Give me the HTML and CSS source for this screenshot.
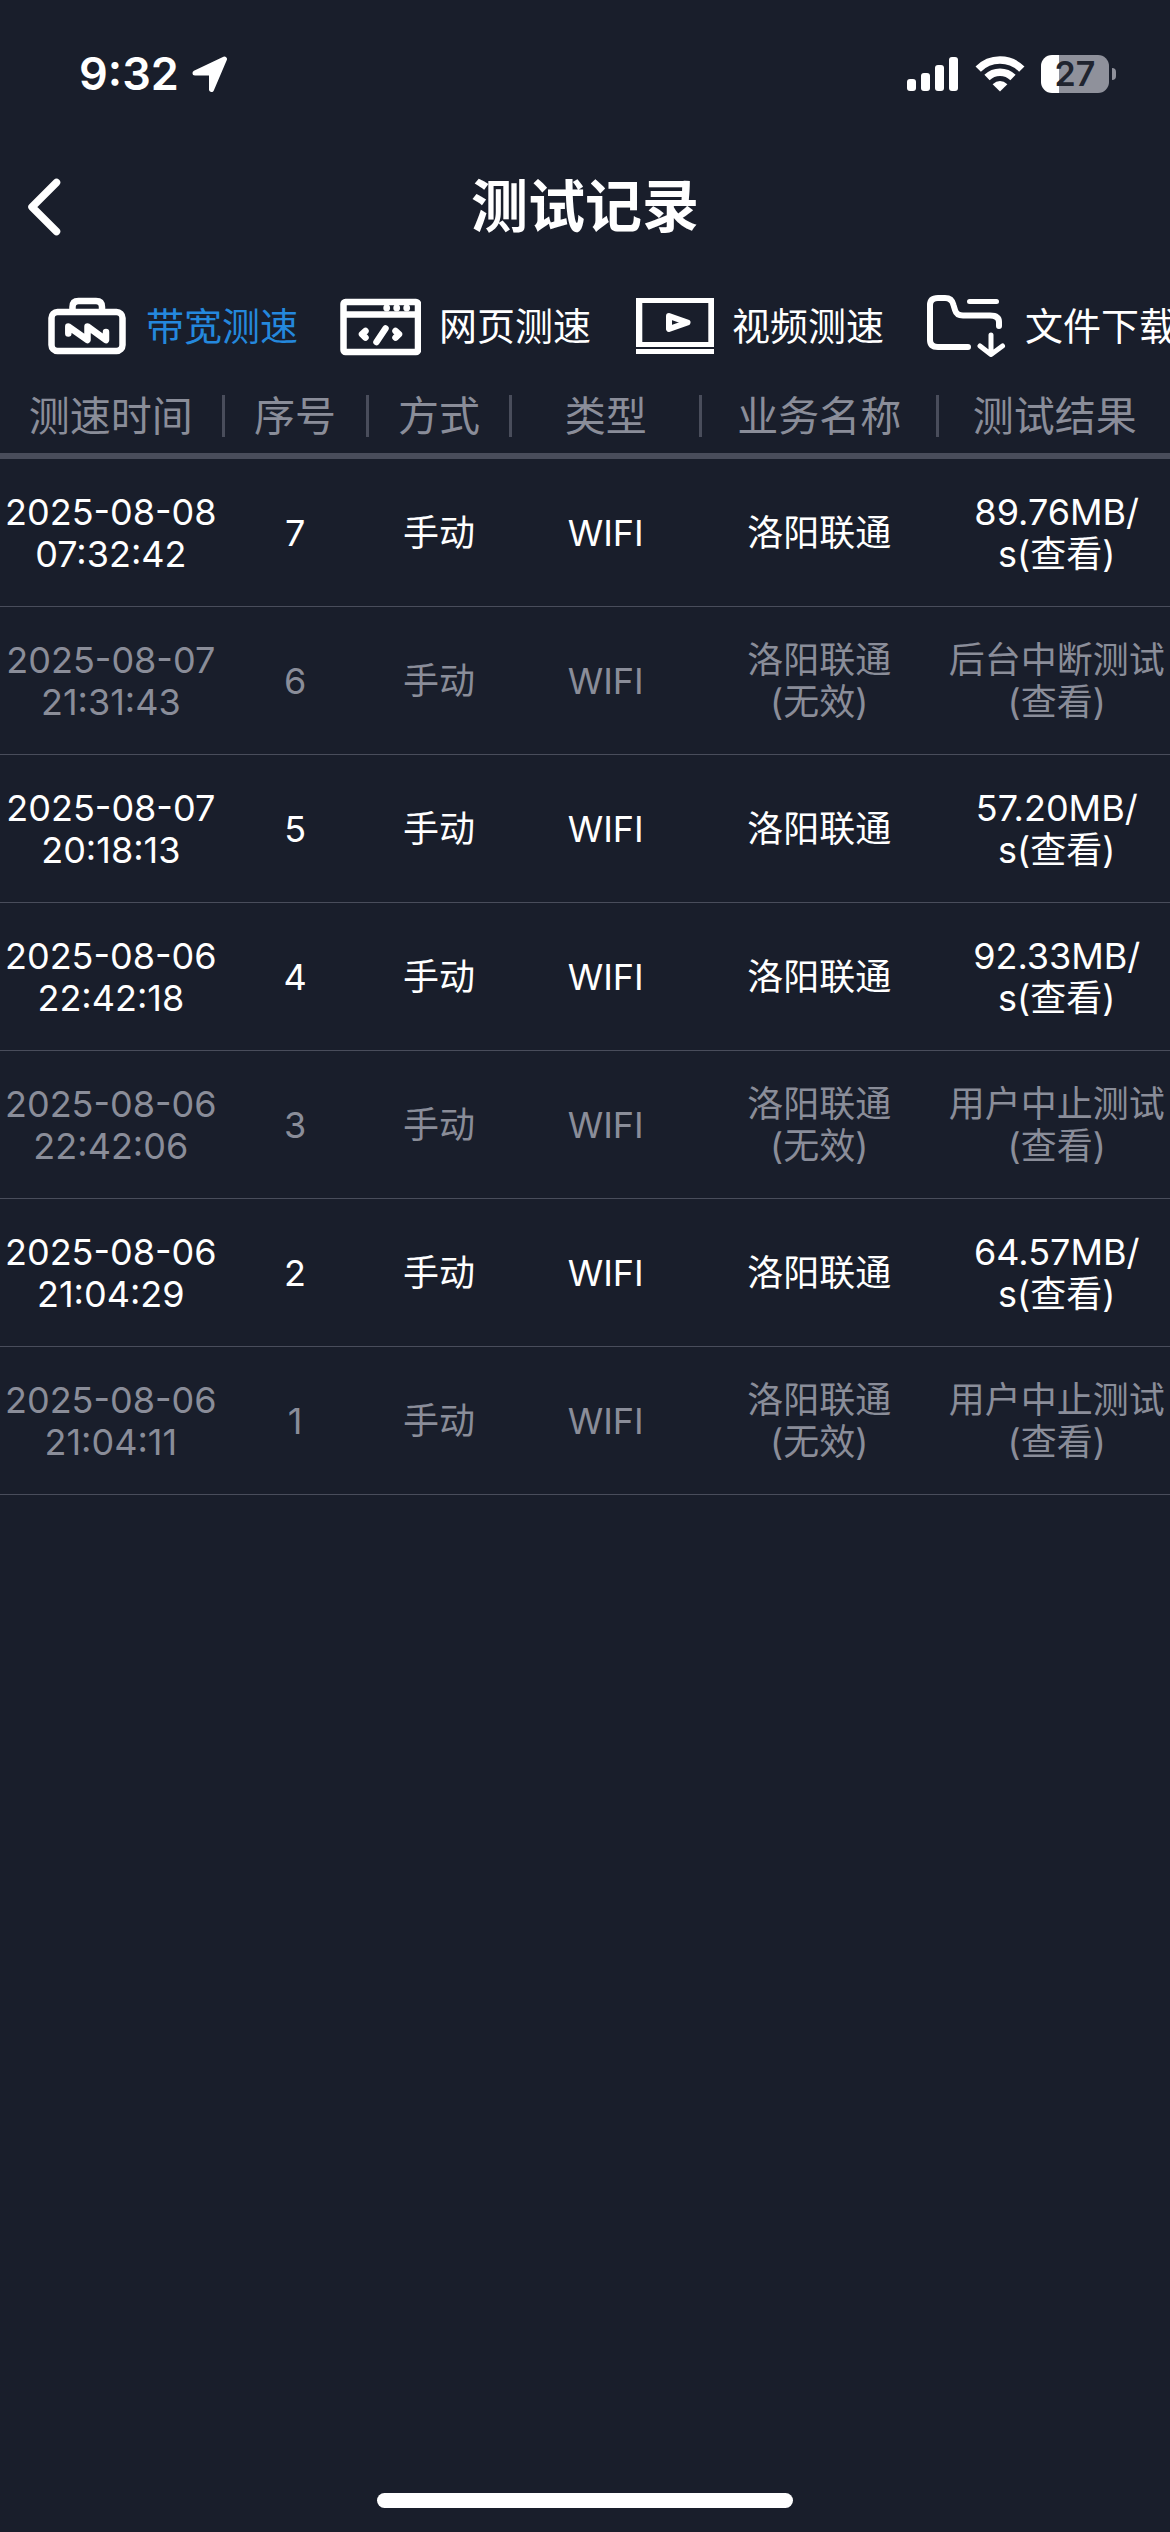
FILE: index.html
```html
<!DOCTYPE html>
<html lang="zh-CN">
<head>
<meta charset="utf-8">
<meta name="viewport" content="width=device-width, initial-scale=1">
<title>测试记录</title>
<link rel="stylesheet" href="styles.css">
</head>
<body>
<div class="screen">
  <div class="status">
    <div class="status-left">
      <span class="clock">9:32</span>
      <svg class="location" width="36" height="36" viewBox="0 0 36 36" aria-hidden="true"><path d="M3 17 32.500 3 19.500 33.500V17Z" fill="#fff" stroke="#fff" stroke-width="5" stroke-linejoin="round"/></svg>
    </div>
    <div class="status-right">
      <svg width="52" height="38" viewBox="0 0 52 38" aria-hidden="true" fill="#fff"><rect x="0" y="24" width="9" height="12" rx="3"/><rect x="14" y="18" width="9" height="18" rx="3"/><rect x="28" y="10" width="9" height="26" rx="3"/><rect x="42" y="2" width="9" height="34" rx="3"/></svg>
      <svg width="50" height="38" viewBox="0 0 50 38" aria-hidden="true"><g fill="none" stroke="#fff" stroke-width="7.500"><path d="M3.200 14.200A30.500 30.500 0 0 1 46.800 14.200"/><path d="M12 22.500A18.500 18.500 0 0 1 38 22.500"/></g><path d="M25 36.500 17.600 29.200Q25 22.800 32.400 29.200Z" fill="#fff"/></svg>
      <div class="battery"><span class="battery-body">27</span><span class="battery-tip"></span></div>
    </div>
  </div>

  <header class="nav">
    <button class="back" type="button" aria-label="返回">
      <svg width="34" height="58" viewBox="0 0 34 58" aria-hidden="true"><path d="M29.500 4.500 5 29 29.500 53.500" fill="none" stroke="#fff" stroke-width="7.500" stroke-linecap="round" stroke-linejoin="round"/></svg>
    </button>
    <h1 class="title">测试记录</h1>
  </header>

  <nav class="tabs">
    <a class="tab active" href="#bandwidth">
      <svg width="81" height="62" viewBox="0 0 81 62" aria-hidden="true" fill="none" stroke="#fff" stroke-linejoin="round"><rect x="4.500" y="17" width="71" height="39" rx="6" stroke-width="6.500"/><path d="M25.500 16V12Q25.500 6 31.500 6H49Q55 6 55 12V16" stroke-width="6.500"/><path d="M21.300 38.500V31.500L40.500 45V31.500L59 45V37" stroke-width="6.500" stroke-linecap="round"/></svg>
      <span>带宽测速</span>
    </a>
    <a class="tab" href="#web">
      <svg width="81" height="62" viewBox="0 0 81 62" aria-hidden="true" fill="none" stroke="#fff"><rect x="3.500" y="7" width="74.500" height="50" rx="2" stroke-width="6.500"/><path d="M4 19.500H78" stroke-width="6.500"/><g fill="#fff" stroke="none"><circle cx="46.700" cy="13" r="3.400"/><circle cx="56.700" cy="13" r="3.400"/><circle cx="66.700" cy="13" r="3.400"/></g><path d="M45.500 33.500 36.500 47" stroke-width="6.500" stroke-linecap="round"/><path d="M25.500 36 22 39.200 25.500 42.600M55.500 36 59 39.200 55.500 42.600" stroke-width="6.500" stroke-linecap="round" stroke-linejoin="round"/></svg>
      <span>网页测速</span>
    </a>
    <a class="tab" href="#video">
      <svg width="81" height="62" viewBox="0 0 81 62" aria-hidden="true" fill="#fff"><path d="M3 3H81V52H3ZM9.300 8V47H75.300V8Z" fill-rule="evenodd"/><path d="M3 54H81V59H3Z"/><path d="M36 21 54.500 27.500 36 34Z" fill="none" stroke="#fff" stroke-width="6" stroke-linejoin="round"/></svg>
      <span>视频测速</span>
    </a>
    <a class="tab" href="#download">
      <svg width="81" height="62" viewBox="0 0 81 62" aria-hidden="true" fill="none" stroke="#fff" stroke-linecap="round" stroke-linejoin="round"><path d="M42 52H12Q4 52 4 45V10Q4 3 12 3H19Q26 3 27.500 10L29 15Q30.500 20.500 37 20.500H64Q73 20.500 73 27V31" stroke-width="6"/><path d="M43.500 6.500H70.500" stroke-width="5"/><path d="M65 40V59M54 51 65 59.500 76.500 51" stroke-width="5"/></svg>
      <span>文件下载</span>
    </a>
  </nav>

  <table class="records">
    <colgroup><col class="c-time"><col class="c-no"><col class="c-mode"><col class="c-type"><col class="c-service"><col class="c-result"></colgroup>
    <thead>
      <tr>
        <th scope="col"><span>测速时间</span></th>
        <th scope="col"><span>序号</span></th>
        <th scope="col"><span>方式</span></th>
        <th scope="col"><span>类型</span></th>
        <th scope="col"><span>业务名称</span></th>
        <th scope="col"><span>测试结果</span></th>
      </tr>
    </thead>
    <tbody>
      <tr><td>2025-08-08 07:32:42</td><td>7</td><td>手动</td><td>WIFI</td><td>洛阳联通</td><td><a href="#7">89.76MB/<wbr>s(查看)</a></td></tr>
      <tr class="invalid"><td>2025-08-07 21:31:43</td><td>6</td><td>手动</td><td>WIFI</td><td>洛阳联通<wbr><span class="note">(无效)</span></td><td><a href="#6">后台中断测试<wbr><span class="note">(查看)</span></a></td></tr>
      <tr><td>2025-08-07 20:18:13</td><td>5</td><td>手动</td><td>WIFI</td><td>洛阳联通</td><td><a href="#5">57.20MB/<wbr>s(查看)</a></td></tr>
      <tr><td>2025-08-06 22:42:18</td><td>4</td><td>手动</td><td>WIFI</td><td>洛阳联通</td><td><a href="#4">92.33MB/<wbr>s(查看)</a></td></tr>
      <tr class="invalid"><td>2025-08-06 22:42:06</td><td>3</td><td>手动</td><td>WIFI</td><td>洛阳联通<wbr><span class="note">(无效)</span></td><td><a href="#3">用户中止测试<wbr><span class="note">(查看)</span></a></td></tr>
      <tr><td>2025-08-06 21:04:29</td><td>2</td><td>手动</td><td>WIFI</td><td>洛阳联通</td><td><a href="#2">64.57MB/<wbr>s(查看)</a></td></tr>
      <tr class="invalid"><td>2025-08-06 21:04:11</td><td>1</td><td>手动</td><td>WIFI</td><td>洛阳联通<wbr><span class="note">(无效)</span></td><td><a href="#1">用户中止测试<wbr><span class="note">(查看)</span></a></td></tr>
    </tbody>
  </table>

  <div class="home"><span class="home-bar"></span></div>
</div>
</body>
</html>
```

FILE: styles.css
```css
* {
  box-sizing: border-box;
}

body {
  margin: 0;
  background: #191e2b;
  color: #fff;
  font-family: Inter, "Noto Sans CJK SC", sans-serif;
}

a {
  color: inherit;
  text-decoration: none;
}

svg {
  display: block;
  flex: none;
}

.screen {
  display: flex;
  flex-direction: column;
  min-height: 100vh;
}

/* Status bar */
.status {
  display: flex;
  justify-content: space-between;
  align-items: center;
  height: 140px;
  padding: 8px 54px 0 79px;
}

.status-left {
  display: flex;
  align-items: center;
  gap: 13px;
}

.clock {
  font-size: 45px;
  line-height: 56px;
  font-weight: 600;
}

.status-right {
  display: flex;
  align-items: center;
  gap: 16px;
}

.battery {
  display: flex;
  align-items: center;
  gap: 3px;
}

.battery-body {
  width: 68px;
  border-radius: 11px;
  background: linear-gradient(to right, #fff 18px, #8f919b 18px);
  color: #20242f;
  font-size: 34px;
  line-height: 38px;
  font-weight: 600;
  text-align: center;
}

.battery-tip {
  width: 4px;
  height: 12px;
  border-radius: 0 6px 6px 0;
  background: #8f919b;
}

/* Title bar */
.nav {
  display: grid;
  grid-template-columns: 1fr auto 1fr;
  align-items: center;
  height: 133px;
  padding: 0 27px;
}

.back {
  justify-self: start;
  padding: 0;
  border: 0;
  background: none;
}

.title {
  margin: 0;
  font-size: 57px;
  line-height: 80px;
  font-weight: 700;
}

/* Test type tabs */
.tabs {
  display: flex;
  gap: 42px;
  height: 105px;
  padding-left: 47px;
  overflow: hidden;
}

.tab {
  display: flex;
  flex: none;
  align-items: center;
  gap: 18px;
  font-size: 38px;
  line-height: 56px;
}

.active {
  color: #2488dd;
}

/* Records */
.records {
  width: 100%;
  table-layout: fixed;
  border-collapse: separate;
  border-spacing: 0;
  font-size: 36px;
  line-height: 42px;
  text-align: center;
}

.c-time { width: 19.2%; }
.c-no { width: 12.3%; }
.c-mode { width: 12.3%; }
.c-type { width: 16.2%; }
.c-service { width: 20.3%; }
.c-result { width: 19.7%; }

.records th {
  height: 81px;
  padding: 0;
  border-bottom: 6px solid #494d5b;
  color: #8a8d99;
  font-size: 41px;
  font-weight: 400;
}

.records th span {
  display: block;
  border-right: 3px solid #494d5b;
}

.records th:last-child span {
  border-right: 0;
}

.records td {
  height: 148px;
  padding: 0 6px 0 3px;
  border-bottom: 1px solid #494d5b;
}

.records td:last-child {
  padding: 0 4px 0 8px;
}

.invalid {
  color: #8a8d99;
}

.note {
  white-space: nowrap;
}

/* Home indicator */
.home {
  display: flex;
  justify-content: center;
  margin-top: auto;
  padding: 24px 0;
}

.home-bar {
  width: 35.6%;
  height: 15px;
  border-radius: 8px;
  background: #fff;
}
```
